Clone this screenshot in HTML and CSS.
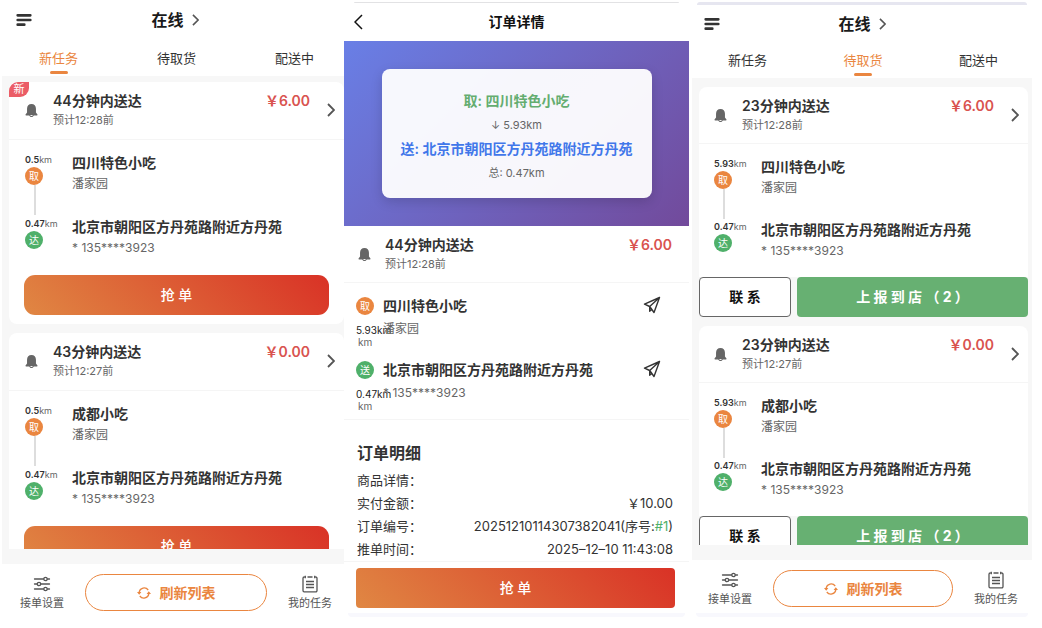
FILE: index.html
```html
<!DOCTYPE html>
<html lang="zh-CN">
<head>
    <meta charset="UTF-8">
    <meta name="viewport" content="width=device-width, initial-scale=1.0">
    <title>骑手接单</title>
    <link rel="stylesheet" href="styles.css">
</head>
<body>
    <!-- shared icons -->
    <svg class="sprite" aria-hidden="true">
        <symbol id="i-menu" viewBox="0 0 16 14">
            <path d="M1.700 2.300h12.600M1.700 7h12.600M1.700 11.700h6.600" stroke="currentColor" stroke-width="2.700" stroke-linecap="round"/>
        </symbol>
        <symbol id="i-next" viewBox="0 0 8 14">
            <path d="M1 1l6 6-6 6" fill="none" stroke="currentColor" stroke-width="1.8"/>
        </symbol>
        <symbol id="i-bell" viewBox="0 0 14 16">
            <path d="M7 1C4 1 2.200 3.200 2.200 6v4.200L.6 12.300c-.3.5 0 1 .5 1h11.800c.5 0 .8-.5.5-1l-1.600-2.100V6C11.800 3.200 10 1 7 1z" fill="currentColor"/>
            <path d="M4.400 12.500c.4 1.700 1.400 2.500 2.600 2.500s2.200-.8 2.600-2.500" fill="currentColor"/>
            <path d="M5.500 12.800c.2.700.8 1 1.500 1s1.300-.3 1.500-1z" fill="#fff"/>
        </symbol>
        <symbol id="i-settings" viewBox="0 0 18 16">
            <g fill="none" stroke="currentColor" stroke-width="1.300" stroke-linecap="round">
                <path d="M1.500 3h9M14.500 3h2M1.500 8h2.500M8 8h8.500M1.500 13h9M14.500 13h2"/>
                <circle cx="12.500" cy="3" r="1.700"/>
                <circle cx="6" cy="8" r="1.700"/>
                <circle cx="12.500" cy="13" r="1.700"/>
            </g>
        </symbol>
        <symbol id="i-tasks" viewBox="0 0 16 18">
            <g fill="none" stroke="currentColor" stroke-width="1.300">
                <path d="M2.800 2H2.200a1.200 1.200 0 0 0-1.200 1.200v12.400a1.200 1.200 0 0 0 1.200 1.200h11.600a1.200 1.200 0 0 0 1.200-1.200V3.200A1.200 1.200 0 0 0 13.800 2h-.6M5.500 2h5"/>
                <path d="M4 6.500h8M4 9.500h8M4 12.500h8"/>
                <path d="M3.300.8v2.400M12.700.8v2.400"/>
            </g>
        </symbol>
        <symbol id="i-refresh" viewBox="0 0 14 14">
            <path d="M2.200 6.200a5 5 0 0 1 9-2.200M11.800 7.800a5 5 0 0 1-9 2.200" fill="none" stroke="currentColor" stroke-width="1.300"/>
            <path d="M0 6h4.400L2.200 8.800zM14 8H9.600l2.200-2.800z" fill="currentColor"/>
        </symbol>
        <symbol id="i-send" viewBox="0 0 18 18">
            <path d="M16.500 1.500L1.500 8.200l5.200 2.300 4.300 6zM16.500 1.500L6.700 10.500v4.700l2-2.100" fill="none" stroke="currentColor" stroke-width="1.400" stroke-linejoin="round"/>
        </symbol>
    </svg>

    <main class="screens">
        <!-- 新任务 -->
        <section class="phone">
            <header class="topbar">
                <button class="icon-btn" aria-label="菜单"><svg class="menu-icon"><use href="#i-menu"/></svg></button>
                <button class="status">在线 <svg class="status-arrow"><use href="#i-next"/></svg></button>
            </header>
            <nav class="tabs">
                <a href="#" class="tab active">新任务</a>
                <a href="#" class="tab">待取货</a>
                <a href="#" class="tab">配送中</a>
            </nav>
            <div class="list-area">
                <div class="list">
                    <article class="card">
                        <span class="badge-new">新</span>
                        <div class="card-head">
                            <svg class="bell"><use href="#i-bell"/></svg>
                            <div class="when">
                                <h2>44分钟内送达</h2>
                                <p>预计12:28前</p>
                            </div>
                            <span class="price">￥6.00</span>
                            <svg class="next"><use href="#i-next"/></svg>
                        </div>
                        <div class="route">
                            <div class="stop">
                                <div class="rail">
                                    <span class="km"><b>0.5</b>km</span>
                                    <span class="dot pick">取</span>
                                    <span class="line"></span>
                                </div>
                                <div class="place">
                                    <h3>四川特色小吃</h3>
                                    <p>潘家园</p>
                                </div>
                            </div>
                            <div class="stop">
                                <div class="rail">
                                    <span class="km"><b>0.47</b>km</span>
                                    <span class="dot drop">达</span>
                                </div>
                                <div class="place">
                                    <h3>北京市朝阳区方丹苑路附近方丹苑</h3>
                                    <p>* 135****3923</p>
                                </div>
                            </div>
                        </div>
                        <div class="grab-row"><button class="grab">抢 单</button></div>
                    </article>

                    <article class="card">
                        <div class="card-head">
                            <svg class="bell"><use href="#i-bell"/></svg>
                            <div class="when">
                                <h2>43分钟内送达</h2>
                                <p>预计12:27前</p>
                            </div>
                            <span class="price">￥0.00</span>
                            <svg class="next"><use href="#i-next"/></svg>
                        </div>
                        <div class="route">
                            <div class="stop">
                                <div class="rail">
                                    <span class="km"><b>0.5</b>km</span>
                                    <span class="dot pick">取</span>
                                    <span class="line"></span>
                                </div>
                                <div class="place">
                                    <h3>成都小吃</h3>
                                    <p>潘家园</p>
                                </div>
                            </div>
                            <div class="stop">
                                <div class="rail">
                                    <span class="km"><b>0.47</b>km</span>
                                    <span class="dot drop">达</span>
                                </div>
                                <div class="place">
                                    <h3>北京市朝阳区方丹苑路附近方丹苑</h3>
                                    <p>* 135****3923</p>
                                </div>
                            </div>
                        </div>
                        <div class="grab-row"><button class="grab">抢 单</button></div>
                    </article>
                </div>
            </div>
            <footer class="bottombar">
                <button class="nav-item"><svg class="nav-icon"><use href="#i-settings"/></svg>接单设置</button>
                <button class="refresh"><svg class="refresh-icon"><use href="#i-refresh"/></svg>刷新列表</button>
                <button class="nav-item"><svg class="nav-icon"><use href="#i-tasks"/></svg>我的任务</button>
            </footer>
        </section>

        <!-- 订单详情 -->
        <section class="phone detail">
            <header class="detail-bar">
                <button class="icon-btn" aria-label="返回">
                    <svg class="back-icon" viewBox="0 0 9 16"><path d="M8 1L1 8l7 7" fill="none" stroke="currentColor" stroke-width="1.500"/></svg>
                </button>
                <h1>订单详情</h1>
            </header>
            <div class="map">
                <div class="summary">
                    <p class="from">取: 四川特色小吃</p>
                    <p>↓ 5.93km</p>
                    <p class="to">送: 北京市朝阳区方丹苑路附近方丹苑</p>
                    <p>总: 0.47km</p>
                </div>
            </div>
            <div class="detail-body">
                <div class="card-head">
                    <svg class="bell"><use href="#i-bell"/></svg>
                    <div class="when">
                        <h2>44分钟内送达</h2>
                        <p>预计12:28前</p>
                    </div>
                    <span class="price">￥6.00</span>
                </div>
                <div class="route">
                    <div class="stop">
                        <div class="rail">
                            <span class="dot pick">取</span>
                            <span class="far">5.93km</span>
                            <span class="unit">km</span>
                        </div>
                        <div class="place">
                            <h3>四川特色小吃</h3>
                            <p>潘家园</p>
                        </div>
                        <button class="icon-btn" aria-label="导航"><svg class="send-icon"><use href="#i-send"/></svg></button>
                    </div>
                    <div class="stop">
                        <div class="rail">
                            <span class="dot drop">送</span>
                            <span class="far">0.47km</span>
                            <span class="unit">km</span>
                        </div>
                        <div class="place">
                            <h3>北京市朝阳区方丹苑路附近方丹苑</h3>
                            <p>* 135****3923</p>
                        </div>
                        <button class="icon-btn" aria-label="导航"><svg class="send-icon"><use href="#i-send"/></svg></button>
                    </div>
                </div>
                <div class="order-info">
                    <h2>订单明细</h2>
                    <dl>
                        <div><dt>商品详情：</dt><dd></dd></div>
                        <div><dt>实付金额：</dt><dd>￥10.00</dd></div>
                        <div><dt>订单编号：</dt><dd>20251210114307382041(序号:<span class="seq">#1</span>)</dd></div>
                        <div><dt>推单时间：</dt><dd>2025–12–10 11:43:08</dd></div>
                    </dl>
                </div>
            </div>
            <footer class="detail-foot"><button class="grab">抢 单</button></footer>
        </section>

        <!-- 待取货 -->
        <section class="phone picked">
            <header class="topbar">
                <button class="icon-btn" aria-label="菜单"><svg class="menu-icon"><use href="#i-menu"/></svg></button>
                <button class="status">在线 <svg class="status-arrow"><use href="#i-next"/></svg></button>
            </header>
            <nav class="tabs">
                <a href="#" class="tab">新任务</a>
                <a href="#" class="tab active">待取货</a>
                <a href="#" class="tab">配送中</a>
            </nav>
            <div class="list-area">
                <div class="list">
                    <article class="card">
                        <div class="card-head">
                            <svg class="bell"><use href="#i-bell"/></svg>
                            <div class="when">
                                <h2>23分钟内送达</h2>
                                <p>预计12:28前</p>
                            </div>
                            <span class="price">￥6.00</span>
                            <svg class="next"><use href="#i-next"/></svg>
                        </div>
                        <div class="route">
                            <div class="stop">
                                <div class="rail">
                                    <span class="km"><b>5.93</b>km</span>
                                    <span class="dot pick">取</span>
                                    <span class="line"></span>
                                </div>
                                <div class="place">
                                    <h3>四川特色小吃</h3>
                                    <p>潘家园</p>
                                </div>
                            </div>
                            <div class="stop">
                                <div class="rail">
                                    <span class="km"><b>0.47</b>km</span>
                                    <span class="dot drop">达</span>
                                </div>
                                <div class="place">
                                    <h3>北京市朝阳区方丹苑路附近方丹苑</h3>
                                    <p>* 135****3923</p>
                                </div>
                            </div>
                        </div>
                        <div class="actions">
                            <button class="contact">联 系</button>
                            <button class="report">上 报 到 店 （ 2 ）</button>
                        </div>
                    </article>

                    <article class="card">
                        <div class="card-head">
                            <svg class="bell"><use href="#i-bell"/></svg>
                            <div class="when">
                                <h2>23分钟内送达</h2>
                                <p>预计12:27前</p>
                            </div>
                            <span class="price">￥0.00</span>
                            <svg class="next"><use href="#i-next"/></svg>
                        </div>
                        <div class="route">
                            <div class="stop">
                                <div class="rail">
                                    <span class="km"><b>5.93</b>km</span>
                                    <span class="dot pick">取</span>
                                    <span class="line"></span>
                                </div>
                                <div class="place">
                                    <h3>成都小吃</h3>
                                    <p>潘家园</p>
                                </div>
                            </div>
                            <div class="stop">
                                <div class="rail">
                                    <span class="km"><b>0.47</b>km</span>
                                    <span class="dot drop">达</span>
                                </div>
                                <div class="place">
                                    <h3>北京市朝阳区方丹苑路附近方丹苑</h3>
                                    <p>* 135****3923</p>
                                </div>
                            </div>
                        </div>
                        <div class="actions">
                            <button class="contact">联 系</button>
                            <button class="report">上 报 到 店 （ 2 ）</button>
                        </div>
                    </article>
                </div>
            </div>
            <footer class="bottombar">
                <button class="nav-item"><svg class="nav-icon"><use href="#i-settings"/></svg>接单设置</button>
                <button class="refresh"><svg class="refresh-icon"><use href="#i-refresh"/></svg>刷新列表</button>
                <button class="nav-item"><svg class="nav-icon"><use href="#i-tasks"/></svg>我的任务</button>
            </footer>
        </section>
    </main>
</body>
</html>
```
FILE: styles.css
```css
:root {
    --orange: #ea8640;
    --green: #4fb06a;
    --red: #d9534f;
    --text: #333;
    --muted: #666;
    --line: #f5f5f5;
    --page: #f7f7f7;
}

* {
    margin: 0;
    padding: 0;
    box-sizing: border-box;
}

body {
    background: #fff;
    color: var(--text);
    font-family: Inter, "Noto Sans CJK SC", sans-serif;
    font-size: 14px;
    line-height: 20px;
}

button {
    font: inherit;
    color: inherit;
    background: none;
    border: none;
    cursor: pointer;
}

a {
    color: inherit;
    text-decoration: none;
}

svg {
    display: block;
    flex: none;
}

.sprite {
    display: none;
}

.screens {
    display: grid;
    grid-template-columns: 342fr 345fr 343fr;
    height: 100vh;
    padding: 0 10px 11px 2px;
}

.phone {
    display: flex;
    flex-direction: column;
    min-width: 0;
    min-height: 0;
}

/* rounded edges of the device frame */
.detail::before,
.picked::before {
    content: '';
    height: 1px;
    margin: 2px 10px 0;
    background: #e2e2e4;
    border-radius: 8px 8px 0 0;
}

.picked::before {
    height: 3px;
    margin: 2px 5px 0;
    background: #e6e6f0;
}

.detail::after,
.picked::after {
    content: '';
    height: 4px;
    margin: 0 4px;
    background: #f8f8fd;
    border-radius: 0 0 8px 8px;
}

.picked {
    padding-left: 3px;
}

/* Top bar */
.topbar {
    display: grid;
    grid-template-columns: 1fr auto 1fr;
    align-items: center;
    height: 40px;
    padding: 0 10px 0 14px;
}

.picked .topbar {
    height: 37px;
    padding: 0 12px;
}

.icon-btn {
    justify-self: start;
}

.menu-icon {
    width: 16px;
    height: 14px;
}

.status {
    display: flex;
    align-items: center;
    gap: 8px;
    color: #1a1a1a;
    font-size: 16px;
    font-weight: 600;
}

.status-arrow {
    width: 7px;
    height: 12px;
    color: #555;
}

/* Tabs */
.tabs {
    display: flex;
    justify-content: space-between;
    padding: 9px 30px 2px 37px;
}

.picked .tabs {
    padding-right: 34px;
    padding-left: 36px;
}

.tab {
    display: flex;
    flex-direction: column;
    align-items: center;
    gap: 4px;
    font-size: 13px;
    line-height: 18px;
}

.tab::after {
    content: '';
    width: 18px;
    height: 3px;
    border-radius: 2px;
}

.tab.active {
    color: var(--orange);
}

.tab.active::after {
    background: var(--orange);
}

/* Order list */
.list-area {
    flex: 1;
    display: flex;
    flex-direction: column;
    min-height: 0;
    padding: 6px 0 15px 7px;
    background: var(--page);
}

.picked .list-area {
    padding: 9px 4px 15px 7px;
}

.list {
    flex: 1;
    min-height: 0;
    overflow-y: auto;
    scrollbar-width: none;
}

.card {
    position: relative;
    margin-bottom: 9px;
    background: #fff;
    border-radius: 8px;
}

.picked .card {
    background: linear-gradient(#fff, #fff) no-repeat 0 0 / 100% calc(100% - 40px);
}

.badge-new {
    position: absolute;
    top: 0;
    left: 0;
    width: 20px;
    color: #fff;
    background: #eb5d66;
    border-radius: 9px 0 9px 0;
    font-size: 11px;
    line-height: 15px;
    text-align: center;
}

.card-head {
    display: flex;
    padding: 9px 9px 10px 16px;
    border-bottom: 1px solid var(--line);
}

.picked .card-head {
    padding-bottom: 9px;
    padding-left: 15px;
}

.bell {
    align-self: center;
    width: 13px;
    height: 15px;
    margin-right: 15px;
    color: #666;
}

.when {
    flex: 1;
}

.when h2,
.place h3 {
    font-size: 14px;
    font-weight: 600;
    line-height: 20px;
}

.when p {
    color: var(--muted);
    font-size: 11px;
    line-height: 18px;
}

.price {
    color: var(--red);
    font-weight: 600;
}

.next {
    align-self: center;
    width: 8px;
    height: 14px;
    margin-left: 17px;
    color: #555;
}

/* Route */
.route {
    padding: 13px 16px 16px;
}

.picked .route {
    padding: 13px 15px 15px;
}

.stop {
    display: flex;
}

.rail {
    display: flex;
    flex-direction: column;
    flex: none;
    width: 47px;
}

.km {
    color: var(--muted);
    font-size: 9px;
    line-height: 14px;
}

.km b {
    color: var(--text);
    font-weight: 600;
}

.dot {
    width: 18px;
    height: 18px;
    color: #fff;
    border-radius: 50%;
    font-size: 10px;
    line-height: 18px;
    text-align: center;
}

.pick {
    background: var(--orange);
}

.drop {
    background: var(--green);
}

.line {
    width: 2px;
    height: 30px;
    margin: 0 0 2px 9px;
    background: #ddd;
}

.picked .line {
    margin-bottom: 1px;
}

.place {
    flex: 1;
    min-width: 0;
    white-space: nowrap;
}

.place p {
    color: var(--muted);
    font-size: 12px;
    line-height: 22px;
}

/* Buttons */
.grab-row {
    padding: 0 15px 9px;
}

.grab {
    width: 100%;
    padding: 10px;
    color: #fff;
    background: linear-gradient(45deg, #e08743, #d93226);
    border-radius: 11px;
    font-weight: 500;
}

.actions {
    display: flex;
    gap: 6px;
}

.contact,
.report {
    padding: 10px 0;
    border-radius: 4px;
    font-weight: 700;
}

.contact {
    flex: 90;
    padding: 9px 0;
    color: #111;
    background: #fff;
    border: 1px solid #666;
}

.report {
    flex: 231;
    color: #fff;
    background: #67b072;
}

/* Bottom bar */
.bottombar {
    display: flex;
    align-items: center;
    gap: 21px;
    padding: 10px 12px 6px 18px;
}

.picked .bottombar {
    padding-right: 14px;
    padding-left: 16px;
}

.nav-item {
    display: flex;
    flex-direction: column;
    align-items: center;
    gap: 3px;
    width: 44px;
    color: #555;
    font-size: 11px;
    line-height: 14px;
    white-space: nowrap;
}

.nav-icon {
    width: 18px;
    height: 18px;
}

.refresh {
    display: flex;
    flex: 1;
    align-items: center;
    justify-content: center;
    gap: 9px;
    height: 37px;
    color: var(--orange);
    border: 1px solid var(--orange);
    border-radius: 19px;
    font-weight: 600;
}

.refresh-icon {
    width: 14px;
    height: 14px;
}

/* Order detail */
.detail-bar {
    display: grid;
    grid-template-columns: 1fr auto 1fr;
    align-items: center;
    height: 38px;
    padding: 0 10px;
    color: #111;
}

.detail-bar h1 {
    font-size: 14px;
    font-weight: 600;
}

.back-icon {
    width: 9px;
    height: 16px;
}

.map {
    display: flex;
    justify-content: center;
    padding: 28px 0;
    background: linear-gradient(135deg, #697fe6, #724a9b);
}

.summary {
    padding: 20px 19px 13px;
    background: rgba(255, 255, 255, 0.95);
    border-radius: 8px;
    box-shadow: 0 4px 12px rgba(0, 0, 0, 0.15);
    color: var(--muted);
    font-size: 11px;
    line-height: 24px;
    text-align: center;
    white-space: nowrap;
}

.summary .from,
.summary .to {
    color: #64ad70;
    font-size: 14px;
    font-weight: 600;
}

.summary .to {
    color: #4177ea;
}

.detail-body {
    flex: 1;
    min-height: 0;
    overflow-y: auto;
    scrollbar-width: none;
}

.detail .card-head {
    padding: 9px 17px 9px 14px;
}

.detail .bell {
    margin-right: 14px;
}

.detail .route {
    display: flex;
    flex-direction: column;
    gap: 12px;
    padding: 13px 28px 7px 12px;
    border-bottom: 1px solid var(--line);
}

/* the distance is wider than the rail and runs into the address */
.detail .rail {
    width: 27px;
    padding-top: 1px;
    white-space: nowrap;
}

.detail .dot {
    margin-bottom: 9px;
}

.far,
.unit {
    color: #222;
    font-size: 10px;
    line-height: 12px;
}

.unit {
    padding-left: 2px;
    color: var(--muted);
}

.detail .place p {
    line-height: 26px;
}

.detail .stop .icon-btn {
    align-self: flex-start;
}

.send-icon {
    width: 18px;
    height: 18px;
}

.order-info {
    padding: 21px 16px 0 13px;
}

.order-info h2 {
    margin-bottom: 4px;
    font-size: 16px;
    font-weight: 600;
    line-height: 24px;
}

.order-info dl div {
    display: flex;
    justify-content: space-between;
    font-size: 13px;
    line-height: 23px;
}

.seq {
    color: var(--green);
}

.detail-foot {
    padding: 6px 14px 5px 12px;
    border-top: 1px solid var(--line);
}

.detail-foot .grab {
    border-radius: 4px;
}
```
